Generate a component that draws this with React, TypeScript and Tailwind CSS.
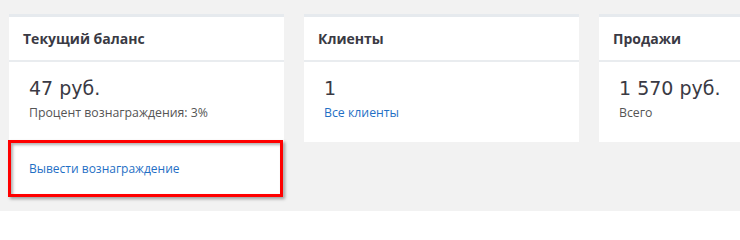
import React from "react";

function Card({
  title,
  value,
  sub,
  subLink,
  footer,
}: {
  title: string;
  value: string;
  sub: string;
  subLink?: boolean;
  footer?: string;
}) {
  return (
    <div className="w-[275px] shrink-0 bg-white border-t-[3px] border-[#e6eaee]">
      <div className="h-[45px] flex items-center px-[14px] border-b-2 border-[#e9ecef] font-bold text-[14px] leading-[21px] text-[#3a3a44]">
        {title}
      </div>
      <div className={(footer ? "h-[78px]" : "h-[80px]") + " px-5 pt-[13px]"}>
        <div
          className="text-[19px] leading-[26px] text-[#3a3a44]"
          style={{ fontFamily: '"DejaVu Sans", sans-serif' }}
        >
          {value}
        </div>
        <div
          className={
            "mt-[3px] text-[12.3px] leading-[18px] " +
            (subLink ? "text-[#1f6fc5]" : "text-[#555]")
          }
        >
          {sub}
        </div>
      </div>
      {footer && (
        <div className="relative h-[57px] flex items-center px-5 text-[12px] leading-[18px] text-[#1f6fc5]">
          {footer}
          <div className="pointer-events-none absolute -left-[1px] right-[1px] top-0 bottom-0 border-[3px] border-[#ff0000] shadow-[2px_2px_3px_rgba(0,0,0,0.35),inset_2px_2px_3px_rgba(0,0,0,0.3)]" />
        </div>
      )}
    </div>
  );
}

export default function App() {
  return (
    <div
      className="w-[740px] h-[211px] overflow-hidden bg-[#f2f2f2] pl-[9px] pt-[14px] flex items-start gap-5"
      style={{ fontFamily: '"Open Sans", "DejaVu Sans", sans-serif' }}
    >
      <Card
        title="Текущий баланс"
        value="47 руб."
        sub="Процент вознаграждения: 3%"
        footer="Вывести вознаграждение"
      />
      <Card title="Клиенты" value="1" sub="Все клиенты" subLink />
      <Card title="Продажи" value="1 570 руб." sub="Всего" />
    </div>
  );
}
